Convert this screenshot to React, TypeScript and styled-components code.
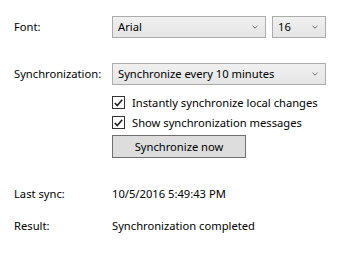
import React from "react";
import styled, { createGlobalStyle } from "styled-components";

const Global = createGlobalStyle`
  html, body { margin: 0; padding: 0; background: #ffffff; }
  body { font-family: "Noto Sans", "Open Sans", sans-serif; font-size: 11.2px; color: #000; }
`;

const Form = styled.div`
  width: 350px;
  height: 269px;
  box-sizing: border-box;
  padding: 16px 0 0 14px;
  display: flex;
  flex-direction: column;
`;

const Row = styled.div<{ $mt?: number; $h?: number }>`
  display: flex;
  align-items: center;
  margin-top: ${(p) => p.$mt ?? 0}px;
  height: ${(p) => p.$h ?? 16}px;
`;

const Label = styled.div`
  width: 98px;
  flex: none;
  line-height: 16px;
`;

const Value = styled.div`
  line-height: 16px;
`;

const Combo = styled.div<{ $w: number }>`
  box-sizing: border-box;
  width: ${(p) => p.$w}px;
  height: 22px;
  border: 1px solid #acacac;
  background: linear-gradient(#f0f0f0, #e5e5e5);
  display: flex;
  align-items: center;
  justify-content: space-between;
  padding: 0 7px 0 5px;
  margin-right: 6px;
`;

const ComboText = styled.span`
  line-height: 16px;
  white-space: nowrap;
`;

const Chevron = () => (
  <svg width="6" height="4" viewBox="0 0 6 4">
    <path d="M0.5 0.8 L3 3.2 L5.5 0.8" fill="none" stroke="#707070" strokeWidth="1" />
  </svg>
);

const Indent = styled.div`
  margin-left: 98px;
`;

const CheckRow = styled.label<{ $mt: number }>`
  display: flex;
  align-items: center;
  margin-top: ${(p) => p.$mt}px;
  height: 13px;
`;

const Box = styled.span`
  box-sizing: border-box;
  width: 13px;
  height: 13px;
  border: 1px solid #333333;
  background: #ffffff;
  display: flex;
  align-items: center;
  justify-content: center;
  margin-right: 7px;
`;

const CheckText = styled.span`
  line-height: 16px;
  white-space: nowrap;
`;

const Button = styled.div`
  box-sizing: border-box;
  width: 134px;
  height: 23px;
  margin-top: 6px;
  border: 1px solid #707070;
  background: #dddddd;
  display: flex;
  align-items: center;
  justify-content: center;
  line-height: 16px;
`;

const Check = ({ text, mt }: { text: string; mt: number }) => (
  <CheckRow $mt={mt}>
    <Box>
      <svg width="9" height="8" viewBox="0 0 9 8">
        <path d="M0.8 4 L3.3 6.6 L8.2 0.8" fill="none" stroke="#212121" strokeWidth="1.6" />
      </svg>
    </Box>
    <CheckText>{text}</CheckText>
  </CheckRow>
);

export default function App() {
  return (
    <>
      <Global />
      <Form>
        <Row $h={22}>
          <Label>Font:</Label>
          <Combo $w={154}>
            <ComboText>Arial</ComboText>
            <Chevron />
          </Combo>
          <Combo $w={54}>
            <ComboText>16</ComboText>
            <Chevron />
          </Combo>
        </Row>
        <Row $mt={25} $h={22}>
          <Label>Synchronization:</Label>
          <Combo $w={214}>
            <ComboText>Synchronize every 10 minutes</ComboText>
            <Chevron />
          </Combo>
        </Row>
        <Indent>
          <Check mt={11} text="Instantly synchronize local changes" />
          <Check mt={7} text="Show synchronization messages" />
          <Button>Synchronize now</Button>
        </Indent>
        <Row $mt={28}>
          <Label>Last sync:</Label>
          <Value>10/5/2016 5:49:43 PM</Value>
        </Row>
        <Row $mt={16}>
          <Label>Result:</Label>
          <Value>Synchronization completed</Value>
        </Row>
      </Form>
    </>
  );
}
